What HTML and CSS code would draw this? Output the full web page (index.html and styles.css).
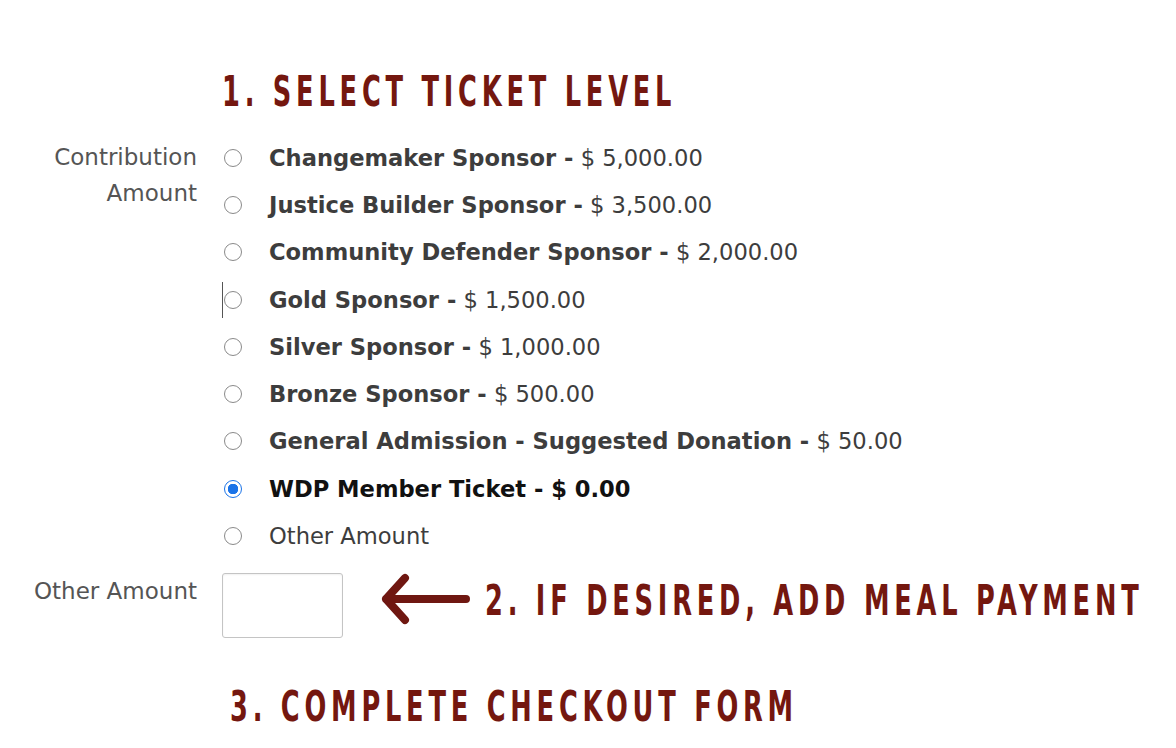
FILE: index.html
```html
<!DOCTYPE html>
<html lang="en">
<head>
  <meta charset="UTF-8">
  <title>Select Ticket Level</title>
  <link rel="stylesheet" href="styles.css">
</head>
<body>

  <div class="page">
    <h2 class="step step-one">1. Select Ticket Level</h2>

    <div class="field">
      <div class="field-label">Contribution<br>Amount</div>
      <ul class="options">
        <li><span class="radio"></span><span class="opt"><b>Changemaker Sponsor -</b> $ 5,000.00</span></li>
        <li><span class="radio"></span><span class="opt"><b>Justice Builder Sponsor -</b> $ 3,500.00</span></li>
        <li><span class="radio"></span><span class="opt"><b>Community Defender Sponsor -</b> $ 2,000.00</span></li>
        <li><span class="radio has-caret"></span><span class="opt"><b>Gold Sponsor -</b> $ 1,500.00</span></li>
        <li><span class="radio"></span><span class="opt"><b>Silver Sponsor -</b> $ 1,000.00</span></li>
        <li><span class="radio"></span><span class="opt"><b>Bronze Sponsor -</b> $ 500.00</span></li>
        <li><span class="radio"></span><span class="opt"><b>General Admission - Suggested Donation -</b> $ 50.00</span></li>
        <li class="selected"><span class="radio checked"></span><span class="opt"><b>WDP Member Ticket - $ 0.00</b></span></li>
        <li><span class="radio"></span><span class="opt">Other Amount</span></li>
      </ul>
    </div>

    <div class="field other">
      <div class="field-label">Other Amount</div>
      <div class="other-row">
        <div class="amount-box"></div>
        <svg class="arrow" width="92" height="52" viewBox="0 0 92 52">
          <path d="M87 26 H7 M26 5 L7 26 L26 47" fill="none" stroke="#6f1711" stroke-width="8" stroke-linecap="round" stroke-linejoin="round"/>
        </svg>
        <h2 class="step step-two">2. If desired, add meal payment</h2>
      </div>
    </div>

    <h2 class="step step-three">3. Complete checkout form</h2>
  </div>

</body>
</html>
```

FILE: styles.css
```css
body {
  margin: 0;
  background-color: #fff;
  font-family: "DejaVu Sans", "Liberation Sans", Arial, sans-serif;
  color: #3d3d3d;
  overflow-x: hidden;
}

.page {
  padding-top: 70px;
}

.step {
  margin: 0;
  font-family: "DejaVu Sans Condensed", "Liberation Sans Narrow", sans-serif;
  font-weight: bold;
  text-transform: uppercase;
  color: #74170f;
  font-size: 42px;
  line-height: 44px;
  letter-spacing: 7px;
  white-space: nowrap;
  width: 660px;
  transform: scaleX(0.68);
  transform-origin: left center;
}

.step-one {
  margin-left: 222px;
  margin-bottom: 20px;
}

.field {
  display: grid;
  grid-template-columns: 197px minmax(0, 1fr);
  column-gap: 24px;
}

.field-label {
  text-align: right;
  font-size: 23px;
  line-height: 36px;
  color: #555;
  padding-top: 5px;
}

.options {
  list-style: none;
  margin: 0;
  padding: 0;
}

.options li {
  display: flex;
  align-items: center;
  height: 47.3px;
  font-size: 22.6px;
}

.opt b {
  font-weight: bold;
}

.selected .opt {
  color: #111;
}

.radio {
  position: relative;
  width: 16px;
  height: 16px;
  border: 1.5px solid #8a8a8a;
  border-radius: 50%;
  margin-left: 3px;
  margin-right: 27px;
  flex: none;
}

.radio.checked {
  border-color: #1a73e8;
  background: radial-gradient(circle, #1a73e8 0 5px, #fff 5.5px);
}

.has-caret::before {
  content: "";
  position: absolute;
  left: -3px;
  top: -10px;
  height: 36px;
  border-left: 1.5px solid #555;
}

.other {
  margin-top: 13px;
}

.other .field-label {
  padding-top: 0;
}

.other-row {
  display: flex;
  align-items: center;
}

.amount-box {
  width: 119px;
  height: 63px;
  margin-left: 1px;
  border: 1px solid #c4c4c4;
  border-radius: 3px;
  box-shadow: inset 0 1px 2px rgba(0, 0, 0, 0.06);
  flex: none;
}

.arrow {
  flex: none;
  margin-left: 36px;
  margin-right: 14px;
  margin-top: -12px;
}

.step-two {
  flex: none;
  width: 440px;
  margin-top: -8px;
}

.step-three {
  margin-left: 230px;
  margin-top: 47px;
}
```
